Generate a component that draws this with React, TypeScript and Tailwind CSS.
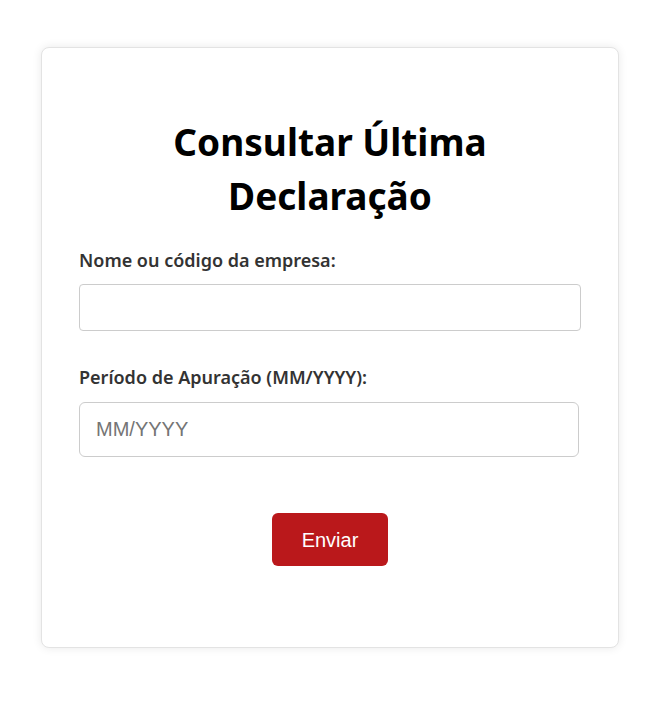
export default function App() {
  return (
    <div className="min-h-screen bg-white pt-[47px]" style={{ fontFamily: '"Noto Sans", "Open Sans", sans-serif' }}>
      <div className="mx-auto h-[601px] w-[578px] rounded-lg border border-[#e3e3e3] bg-white px-[37px] pt-[67px] shadow-[0_0_10px_rgba(0,0,0,0.09)]">
        <h1 className="mx-auto max-w-[380px] text-center text-[37px] font-bold leading-[54px] text-black">
          Consultar Última Declaração
        </h1>

        <form className="mt-[24px]" onSubmit={(e) => e.preventDefault()}>
          <label className="block text-[18px] font-semibold leading-[27px] text-[#333]">
            Nome ou código da empresa:
          </label>
          <input
            type="text"
            className="mt-[10px] block h-[47px] w-[502px] rounded-[4px] border border-[#cccccc] px-[15px] outline-none"
          />

          <label className="mt-[33px] block text-[18px] font-semibold leading-[27px] text-[#333]">
            Período de Apuração (MM/YYYY):
          </label>
          <input
            type="text"
            placeholder="MM/YYYY"
            className="mt-[11px] block h-[55px] w-[500px] rounded-[6px] border border-[#cccccc] px-[16px] text-[20px] outline-none placeholder:text-[#757575]"
            style={{ fontFamily: '"Liberation Sans", Arial, sans-serif' }}
          />

          <div className="mt-[56px] flex justify-center">
            <button
              type="submit"
              className="h-[53px] w-[116px] rounded-[6px] bg-[#ba181b] text-[20px] text-white"
              style={{ fontFamily: '"Liberation Sans", Arial, sans-serif' }}
            >
              Enviar
            </button>
          </div>
        </form>
      </div>
    </div>
  );
}
